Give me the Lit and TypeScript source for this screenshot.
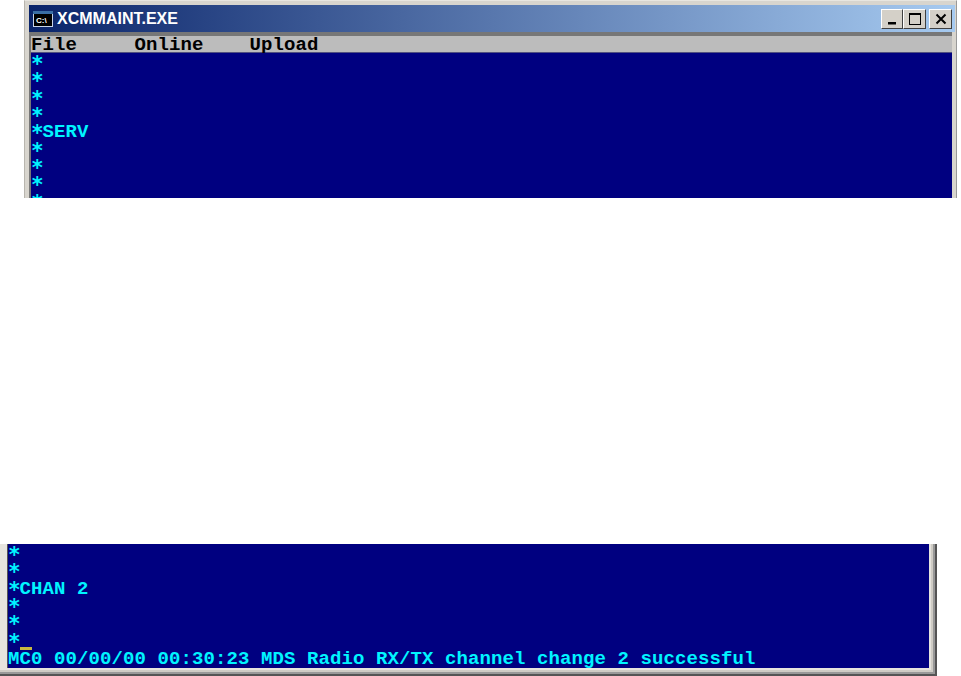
import { LitElement, html, css } from "lit";
import { customElement } from "lit/decorators.js";

const row = (text: string) => html`<div class="row"><span class="a">*</span>${text}</div>`;

@customElement("app-root")
export class AppRoot extends LitElement {
  static styles = css`
    :host { display: block; width: 961px; height: 676px; background: #fff; overflow: hidden; }
    .page { height: 676px; display: flex; flex-direction: column; justify-content: space-between; align-items: flex-start; }
    .top { margin-left: 24px; width: 933px; height: 198px; box-sizing: border-box; overflow: hidden; background: #d8d5ce;
      border-left: 1px solid #b8b5ae; border-top: 1px solid #e8e6e0; border-right: 1px solid #999; padding: 4px 1px 0 4px; display: flex; flex-direction: column; }
    .title { height: 27px; flex: none; box-sizing: border-box; background: linear-gradient(90deg, #0a246a, #a6caf0); display: flex; align-items: center; padding: 0 3px 0 4px; gap: 4px; }
    .title-text { color: #fff; font: bold 16px/1 "Liberation Sans", Arial, sans-serif; flex: 1; }
    .btns { display: flex; }
    .btn { width: 23px; height: 20px; box-sizing: border-box; background: #d4d0c8; border: 1px solid; border-color: #fff #404040 #404040 #fff; display: flex; align-items: center; justify-content: center; }
    .btn.min { width: 22px; }
    .btn.close { margin-left: 3px; }
    .btn svg { display: block; }
    .inner { flex: 1; min-height: 0; margin-right: 3px; border-top: 4px solid #777; border-left: 2px solid #777; display: flex; flex-direction: column; }
    .menu { flex: none; height: 16px; background: #bcbcbc; color: #000; font: bold 19px/18px "Liberation Mono", monospace; letter-spacing: 0.1px; white-space: pre; border-bottom: 1px solid #505080; }
    .screen { background: #000080; color: #00f4ff; font: bold 19px/17.35px "Liberation Mono", monospace; letter-spacing: 0.1px; flex: 1; overflow: hidden; }
    .row { height: 17.35px; white-space: pre; }
    .a { font-family: "DejaVu Sans Mono", monospace; font-size: 21px; line-height: 17px; letter-spacing: -1.14px; position: relative; top: 3px; }
    .bottom { width: 937px; height: 132px; box-sizing: border-box; background: #e6e4de; box-shadow: inset -2px -2px 0 #555, inset -4px -4px 0 #999, inset -6px -6px 0 #cfccc5; padding: 0 8px 8px 7px; display: flex; flex-direction: column; }
    .bottom .screen { position: relative; border-left: 1px solid #555; }
    .cursor { position: absolute; left: 12px; top: 103px; width: 12px; height: 3px; background: #c8b840; }
    .status { display: block; margin-top: 2px; line-height: 18px; white-space: pre; }
    .ico-text { font: bold 8px "Liberation Sans", sans-serif; fill: #fff; }
  `;

  render() {
    return html`<div class="page">
      <section class="top">
        <div class="title">
          <svg width="20" height="16" viewBox="0 0 20 16">
            <rect width="20" height="16" fill="#c8d4e8"/>
            <rect width="20" height="3" fill="#3a6ea5"/>
            <rect x="1" y="3" width="18" height="12" fill="#000"/>
            <text class="ico-text" x="3" y="12">C:\\</text>
          </svg>
          <span class="title-text">XCMMAINT.EXE</span>
          <div class="btns">
            <div class="btn min"><svg width="12" height="12"><rect x="2" y="9" width="8" height="2.5" fill="#000"/></svg></div>
            <div class="btn"><svg width="14" height="14"><rect x="1.5" y="1.5" width="11" height="11" fill="none" stroke="#000"/><rect x="1" y="1" width="12" height="2" fill="#000"/></svg></div>
            <div class="btn close"><svg width="12" height="12"><path d="M1.5 1.5 10.5 10.5M10.5 1.5 1.5 10.5" stroke="#000" stroke-width="2"/></svg></div>
          </div>
        </div>
        <div class="inner">
          <div class="menu">File     Online    Upload</div>
          <div class="screen">
            ${["", "", "", "", "SERV", "", "", "", ""].map(row)}
          </div>
        </div>
      </section>
      <section class="bottom">
        <div class="screen">
          ${["", "", "CHAN 2", "", "", ""].map(row)}
          <span class="cursor"></span>
          <span class="status">MC0 00/00/00 00:30:23 MDS Radio RX/TX channel change 2 successful</span>
        </div>
      </section>
    </div>`;
  }
}
